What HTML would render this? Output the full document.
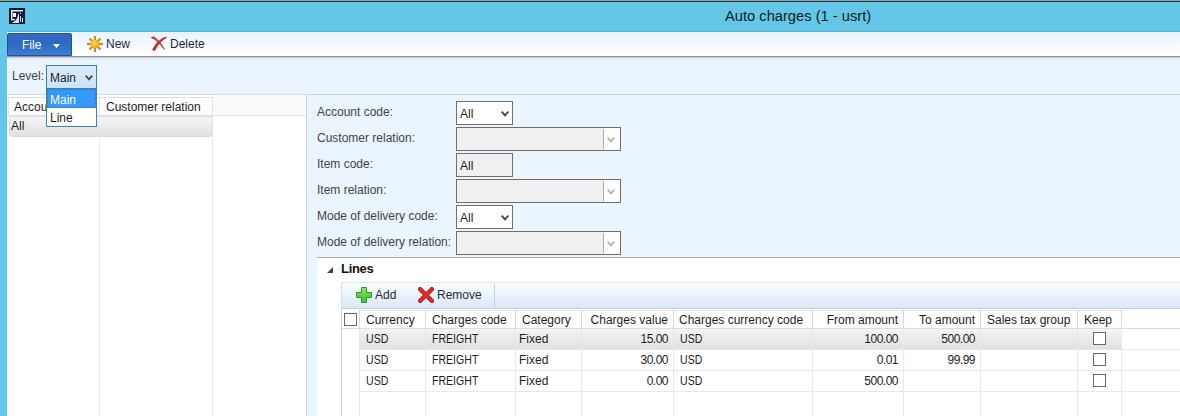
<!DOCTYPE html>
<html><head><meta charset="utf-8">
<style>
*{margin:0;padding:0;box-sizing:border-box}
html,body{width:1180px;height:416px;overflow:hidden;background:#64c7e8;font-family:"Liberation Sans",sans-serif;font-size:12px;color:#1e1e1e}
.a{position:absolute;white-space:nowrap}
#topline{left:0;top:0;width:1180px;height:1px;background:#9aa3a8}
#title{left:725px;top:8px;font-size:14.7px;color:#141a22}
#toolbar{left:7px;top:32px;width:1173px;height:25px;background:linear-gradient(#e9f3fc,#ffffff);border-bottom:1px solid #8e9399}
#filebtn{left:7px;top:33px;width:65px;height:23px;background:linear-gradient(#3468bd,#2e67c0 45%,#3b80d6);border-radius:2px 2px 0 0;border:1px solid #21519c;color:#fff;font-size:12px}
#content{left:7px;top:57px;border-top:1px solid #cdd1d5;box-shadow:inset 0 1px 0 #e0e5ea;width:1173px;height:359px;background:#ebf5fe}
.tb{color:#1e2a44;font-size:12px}
#leftgrid{left:7px;top:94px;width:299px;height:322px;background:#fff;border-top:1px solid #d7dde2}
#rightpanel{left:306px;top:94px;width:874px;height:322px;background:#ebf5fe;border-left:1px solid #c9d3da;border-top:1px solid #d2d7db}
.lbl{color:#444}
.combo{background:#fff;border:1px solid #707070;height:24px;width:57px}
.dis{background:#f0f0f0;border:1px solid #6e6e6e;height:24px;width:165px}
.dis .sep{position:absolute;right:16px;top:1px;width:1px;height:20px;background:#ababab}
.dis .btn{position:absolute;right:0;top:0;width:16px;height:22px;background:#fdfdfd}
.chev{position:absolute}
.hc{background:linear-gradient(#ffffff,#f9fbfc);border-right:1px solid #dde3e8;box-shadow:inset 1px 0 0 #fff}
.ht{color:#1e1e1e}
.rt{color:#1e1e1e}
.cb{width:13px;height:13px;border:1px solid #6a6a6a;background:#fff}
.sel{background:linear-gradient(#f5f5f5,#e0e0e0)}
.narrow{letter-spacing:-0.5px}
.narrowc{transform:scaleX(0.88);transform-origin:0 0}

</style></head><body>
<div class="a" id="topline"></div><div class="a" style="left:0;top:1px;width:1180px;height:1px;background:#1d3946"></div><div class="a" style="left:7px;top:31px;width:1173px;height:1px;background:#58b4d6"></div>
<svg class="a" style="left:9px;top:8px" width="16" height="16" viewBox="0 0 16 16"><rect width="16" height="16" fill="#0a1a3c"/><path d="M2 2 H14 V3.5 H3.5 V11 H6 V12.3 H2 Z" fill="#eef3f8"/><rect x="4" y="5" width="3" height="4" fill="#fff"/><path d="M3 15 C6 13 8 12 9 7 L10 5 L10 15 Z" fill="#e0e8f0"/><rect x="11" y="5" width="1" height="1" fill="#fff"/><rect x="11" y="8" width="1" height="6" fill="#cfd8e0"/><rect x="13" y="10" width="1" height="4" fill="#fff"/></svg>
<div class="a" id="title">Auto charges (1 - usrt)</div>
<div class="a" id="toolbar"></div>
<div class="a" id="filebtn"><span class="a" style="left:14px;top:4px">File</span><svg class="a" style="left:45px;top:10px" width="7" height="4"><path d="M0 0 L7 0 L3.5 4Z" fill="#fff"/></svg></div>
<svg class="a" style="left:87px;top:36px" width="16" height="16" viewBox="0 0 16 16"><defs><radialGradient id="sg" cx="0.45" cy="0.4" r="0.6"><stop offset="0" stop-color="#ffe040"/><stop offset="1" stop-color="#f0a010"/></radialGradient></defs><g stroke="#c08a35" stroke-width="2.2"><line x1="8" y1="0" x2="8" y2="16"/><line x1="0" y1="8" x2="16" y2="8"/><line x1="2.5" y1="2.5" x2="13.5" y2="13.5"/><line x1="13.5" y1="2.5" x2="2.5" y2="13.5"/></g><circle cx="8" cy="8" r="4.6" fill="url(#sg)"/></svg>
<div class="a tb" style="left:106px;top:37px">New</div>
<svg class="a" style="left:148px;top:33px" width="22" height="22" viewBox="0 0 22 22"><path d="M3 4.2 Q3.3 6.2 5.6 6 Q11 9.5 15.8 16.6 L17 16.2 Q12.5 8.5 6.5 3.8 Q4.2 3 3 4.2 Z" fill="#c94030"/><path d="M18.4 3.6 Q10 5.8 4.3 16.2 Q4.8 18.8 7.2 17.6 Q11.5 8.2 18.6 4.9 Z" fill="#bf3527"/></svg>
<div class="a tb" style="left:170px;top:37px">Delete</div>
<div class="a" id="content"></div>
<div class="a lbl" style="left:12px;top:69px">Level:</div>
<div class="a" id="leftgrid"></div>
<!-- left grid header -->
<div class="a hc" style="left:8px;top:97px;width:92px;height:19px;border:1px solid #dde3e8"></div>
<div class="a hc" style="left:99px;top:97px;width:114px;height:19px;border:1px solid #dde3e8"></div>
<div class="a" style="left:213px;top:95px;width:93px;height:20px;background:#fafafa"></div><div class="a" style="left:213px;top:115px;width:93px;height:1px;background:#dfe3e6"></div>
<div class="a ht" style="left:14px;top:100px">Account code</div>
<div class="a ht" style="left:106px;top:100px">Customer relation</div>
<div class="a sel" style="left:9px;top:116px;width:204px;height:21px;border:1px solid #dedede;border-radius:0 0 3px 3px"></div>
<div class="a rt" style="left:11px;top:119px">All</div>
<div class="a" style="left:99px;top:137px;width:1px;height:279px;background:#e3e9ee"></div>
<div class="a" style="left:212px;top:137px;width:1px;height:279px;background:#e3e9ee"></div>
<!-- level combo -->
<div class="a" style="left:46px;top:65px;width:51px;height:24px;border:1px solid #3f80a3;background:linear-gradient(#dcedfb,#cbe3f7)"></div>
<div class="a" style="left:50px;top:71px;color:#1e1e1e">Main</div>
<svg class="a" style="left:85px;top:75px" width="8" height="6"><path d="M0.7 0.7 L4 4.3 L7.3 0.7" stroke="#4a4a4a" stroke-width="1.9" fill="none"/></svg>
<div class="a" style="left:46px;top:88px;width:51px;height:39px;border:1px solid #3f80a3;background:#fff"></div>
<div class="a" style="left:47px;top:89px;width:49px;height:19px;background:#3399ff;border:1px dotted #4a6f95"></div>
<div class="a" style="left:50px;top:93px;color:#fff">Main</div>
<div class="a" style="left:50px;top:111px;color:#1e1e1e">Line</div>

<div class="a" id="rightpanel"></div>
<div class="a lbl" style="left:317px;top:105px">Account code:</div>
<div class="a lbl" style="left:317px;top:131px">Customer relation:</div>
<div class="a lbl" style="left:317px;top:157px">Item code:</div>
<div class="a lbl" style="left:317px;top:183px">Item relation:</div>
<div class="a lbl" style="left:317px;top:209px">Mode of delivery code:</div>
<div class="a lbl" style="left:317px;top:235px">Mode of delivery relation:</div>

<div class="a combo" style="left:456px;top:101px"><span class="a" style="left:3px;top:5px">All</span><svg class="chev" style="left:44px;top:9px" width="8" height="6"><path d="M0.7 0.7 L4 4.3 L7.3 0.7" stroke="#444" stroke-width="1.8" fill="none"/></svg></div>
<div class="a dis" style="left:456px;top:127px"><div class="btn"></div><div class="sep"></div><svg class="chev" style="left:150px;top:9px" width="8" height="6"><path d="M0.7 0.7 L4 4.3 L7.3 0.7" stroke="#b5b5b5" stroke-width="1.8" fill="none"/></svg></div>
<div class="a combo" style="left:456px;top:153px;background:#f0f0f0"><span class="a" style="left:3px;top:5px">All</span></div>
<div class="a dis" style="left:456px;top:179px"><div class="btn"></div><div class="sep"></div><svg class="chev" style="left:150px;top:9px" width="8" height="6"><path d="M0.7 0.7 L4 4.3 L7.3 0.7" stroke="#b5b5b5" stroke-width="1.8" fill="none"/></svg></div>
<div class="a combo" style="left:456px;top:205px"><span class="a" style="left:3px;top:5px">All</span><svg class="chev" style="left:44px;top:9px" width="8" height="6"><path d="M0.7 0.7 L4 4.3 L7.3 0.7" stroke="#444" stroke-width="1.8" fill="none"/></svg></div>
<div class="a dis" style="left:456px;top:231px"><div class="btn"></div><div class="sep"></div><svg class="chev" style="left:150px;top:9px" width="8" height="6"><path d="M0.7 0.7 L4 4.3 L7.3 0.7" stroke="#b5b5b5" stroke-width="1.8" fill="none"/></svg></div>

<!-- Lines group -->
<div class="a" style="left:317px;top:257px;width:863px;height:1px;background:#a8b0b8"></div>
<div class="a" style="left:317px;top:258px;width:863px;height:158px;background:#fff"></div>
<svg class="a" style="left:327px;top:267px" width="6" height="6"><path d="M6 0 L6 6 L0 6Z" fill="#444"/></svg>
<div class="a" style="left:341px;top:261px;font-weight:bold;font-size:13px;letter-spacing:-0.3px;color:#111">Lines</div>
<div class="a" style="left:341px;top:282px;width:839px;height:27px;background:linear-gradient(#fbfdff,#d9e8f8);border-top:1px solid #dfe6ec;border-left:1px solid #d5dfe8;border-bottom:1px solid #c3cfdb"></div>
<svg class="a" style="left:356px;top:287px" width="16" height="16" viewBox="0 0 16 16"><defs><linearGradient id="ag" x1="0" y1="0" x2="0" y2="1"><stop offset="0" stop-color="#8ae86a"/><stop offset="1" stop-color="#3cbf2a"/></linearGradient></defs><path d="M5.5 0.5 H10.5 V5.5 H15.5 V10.5 H10.5 V15.5 H5.5 V10.5 H0.5 V5.5 H5.5 Z" fill="url(#ag)" stroke="#2a9a22" stroke-width="1"/></svg>
<div class="a tb" style="left:375px;top:288px">Add</div>
<svg class="a" style="left:418px;top:287px" width="16" height="16" viewBox="0 0 16 16"><path d="M2.2 2.2 L13.8 13.8 M13.8 2.2 L2.2 13.8" stroke="#a81818" stroke-width="4.4" stroke-linecap="round"/><path d="M2.2 2.2 L13.8 13.8 M13.8 2.2 L2.2 13.8" stroke="#e02a2a" stroke-width="2.8" stroke-linecap="round"/></svg>
<div class="a tb" style="left:437px;top:288px">Remove</div>
<div class="a" style="left:494px;top:284px;width:1px;height:24px;background:#c5d0da"></div>

<div class="a" style="left:341px;top:309px;width:839px;height:107px;background:#fff"></div>
<div class="a" style="left:342px;top:310px;width:838px;height:19px;background:#fff;border-bottom:1px solid #dcdfe2"></div>
<div class="a" style="left:359px;top:310px;width:763px;height:1px;background:#e6e6e6"></div>
<div class="a" style="left:359px;top:310px;width:1px;height:19px;background:#dadada"></div>
<div class="a" style="left:425px;top:310px;width:1px;height:19px;background:#dadada"></div>
<div class="a" style="left:515px;top:310px;width:1px;height:19px;background:#dadada"></div>
<div class="a" style="left:581px;top:310px;width:1px;height:19px;background:#dadada"></div>
<div class="a" style="left:673px;top:310px;width:1px;height:19px;background:#dadada"></div>
<div class="a" style="left:812px;top:310px;width:1px;height:19px;background:#dadada"></div>
<div class="a" style="left:903px;top:310px;width:1px;height:19px;background:#dadada"></div>
<div class="a" style="left:980px;top:310px;width:1px;height:19px;background:#dadada"></div>
<div class="a" style="left:1077px;top:310px;width:1px;height:19px;background:#dadada"></div>
<div class="a" style="left:1121px;top:310px;width:1px;height:19px;background:#dadada"></div>
<div class="a ht" style="left:366px;top:313px">Currency</div>
<div class="a ht" style="left:432px;top:313px">Charges code</div>
<div class="a ht" style="left:522px;top:313px">Category</div>
<div class="a ht" style="left:468px;width:200px;text-align:right;top:313px">Charges value</div>
<div class="a ht" style="left:679px;top:313px">Charges currency code</div>
<div class="a ht" style="left:698px;width:200px;text-align:right;top:313px">From amount</div>
<div class="a ht" style="left:775px;width:200px;text-align:right;top:313px">To amount</div>
<div class="a ht" style="left:987px;top:313px">Sales tax group</div>
<div class="a ht" style="left:1084px;top:313px">Keep</div>
<div class="a" style="left:341px;top:309px;width:1px;height:107px;background:#c9ced3"></div>
<div class="a cb" style="left:344px;top:313px"></div>
<div class="a sel" style="left:359px;top:329px;width:762px;height:20px"></div>
<div class="a" style="left:359px;top:349px;width:821px;height:1px;background:#e3e9ee"></div>
<div class="a" style="left:359px;top:370px;width:821px;height:1px;background:#e3e9ee"></div>
<div class="a" style="left:359px;top:391px;width:821px;height:1px;background:#e3e9ee"></div>
<div class="a" style="left:359px;top:329px;width:1px;height:87px;background:#e3e9ee"></div>
<div class="a" style="left:425px;top:329px;width:1px;height:87px;background:#e3e9ee"></div>
<div class="a" style="left:515px;top:329px;width:1px;height:87px;background:#e3e9ee"></div>
<div class="a" style="left:581px;top:329px;width:1px;height:87px;background:#e3e9ee"></div>
<div class="a" style="left:673px;top:329px;width:1px;height:87px;background:#e3e9ee"></div>
<div class="a" style="left:812px;top:329px;width:1px;height:87px;background:#e3e9ee"></div>
<div class="a" style="left:903px;top:329px;width:1px;height:87px;background:#e3e9ee"></div>
<div class="a" style="left:980px;top:329px;width:1px;height:87px;background:#e3e9ee"></div>
<div class="a" style="left:1077px;top:329px;width:1px;height:87px;background:#e3e9ee"></div>
<div class="a" style="left:1121px;top:329px;width:1px;height:87px;background:#e3e9ee"></div>
<div class="a rt narrowc" style="left:366px;top:332px">USD</div>
<div class="a rt narrowc" style="left:432px;top:332px">FREIGHT</div>
<div class="a rt" style="left:519px;top:332px">Fixed</div>
<div class="a rt narrow" style="left:468px;width:200px;text-align:right;top:332px">15.00</div>
<div class="a rt narrowc" style="left:680px;top:332px">USD</div>
<div class="a rt narrow" style="left:698px;width:200px;text-align:right;top:332px">100.00</div>
<div class="a rt narrow" style="left:775px;width:200px;text-align:right;top:332px">500.00</div>
<div class="a cb" style="left:1093px;top:332px"></div>
<div class="a rt narrowc" style="left:366px;top:353px">USD</div>
<div class="a rt narrowc" style="left:432px;top:353px">FREIGHT</div>
<div class="a rt" style="left:519px;top:353px">Fixed</div>
<div class="a rt narrow" style="left:468px;width:200px;text-align:right;top:353px">30.00</div>
<div class="a rt narrowc" style="left:680px;top:353px">USD</div>
<div class="a rt narrow" style="left:698px;width:200px;text-align:right;top:353px">0.01</div>
<div class="a rt narrow" style="left:775px;width:200px;text-align:right;top:353px">99.99</div>
<div class="a cb" style="left:1093px;top:353px"></div>
<div class="a rt narrowc" style="left:366px;top:374px">USD</div>
<div class="a rt narrowc" style="left:432px;top:374px">FREIGHT</div>
<div class="a rt" style="left:519px;top:374px">Fixed</div>
<div class="a rt narrow" style="left:468px;width:200px;text-align:right;top:374px">0.00</div>
<div class="a rt narrowc" style="left:680px;top:374px">USD</div>
<div class="a rt narrow" style="left:698px;width:200px;text-align:right;top:374px">500.00</div>
<div class="a cb" style="left:1093px;top:374px"></div>
</body></html>
